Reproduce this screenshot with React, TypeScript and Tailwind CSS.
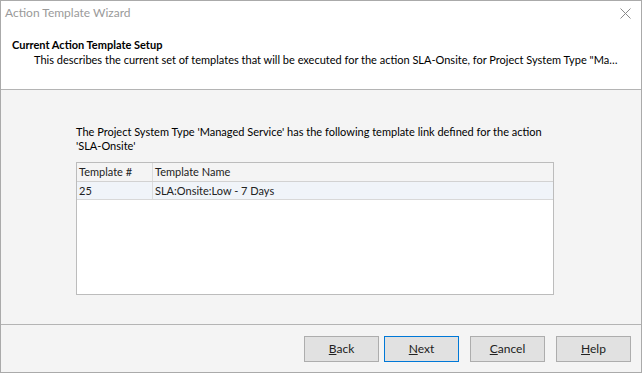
const buttons = [
  { key: 'B', rest: 'ack', primary: false },
  { key: 'N', rest: 'ext', primary: true },
  { key: 'C', rest: 'ancel', primary: false },
  { key: 'H', rest: 'elp', primary: false },
];

export default function App() {
  return (
    <div className="w-[642px] h-[373px] border border-[#aaaaaa] bg-white flex flex-col text-[11px] text-black font-['Lato',sans-serif] overflow-hidden">
      {/* title bar */}
      <div className="h-[24px] flex items-center justify-between pl-[4px] pr-[9px] shrink-0">
        <span className="text-[12px] text-[#9a9a9a]">Action Template Wizard</span>
        <svg width="11" height="11" viewBox="0 0 11 11" className="mr-[1px]">
          <path d="M0.5 0.5 L10.5 10.5 M10.5 0.5 L0.5 10.5" stroke="#8a8a8a" strokeWidth="1" fill="none" />
        </svg>
      </div>

      {/* header */}
      <div className="h-[65px] shrink-0 border-b border-[#b4b4b4] pt-[12px] leading-[15px]">
        <div className="pl-[11px] font-bold">Current Action Template Setup</div>
        <div className="pl-[33px] whitespace-nowrap">
          This describes the current set of templates that will be executed for the action SLA-Onsite, for Project System Type "Ma…
        </div>
      </div>

      {/* body */}
      <div className="flex-1 bg-[#f4f4f4] border-b border-[#b4b4b4] pt-[35px] pl-[75px]">
        <p className="leading-[14px] whitespace-nowrap">
          The Project System Type 'Managed Service' has the following template link defined for the action
          <br />
          'SLA-Onsite'
        </p>
        <div className="mt-[9px] w-[478px] h-[133px] border border-[#bcbcbc] bg-white">
          <div className="flex h-[19px] bg-[#f4f4f4] border-b border-[#d2d2d2] text-[#222]">
            <div className="w-[76px] border-r border-[#dcdcdc] pl-[2px] leading-[18px]">Template #</div>
            <div className="flex-1 pl-[2px] leading-[18px]">Template Name</div>
          </div>
          <div className="flex h-[18px] bg-[#f0f4f9] border-b border-[#d8d8d8] text-[#222]">
            <div className="w-[76px] border-r border-[#dcdcdc] pl-[2px] leading-[17px]">25</div>
            <div className="flex-1 pl-[2px] leading-[17px]">SLA:Onsite:Low - 7 Days</div>
          </div>
        </div>
      </div>

      {/* footer */}
      <div className="h-[47px] shrink-0 bg-[#f4f4f4] flex justify-end items-start pt-[11px] pr-[10px]">
        {buttons.map((b, i) => (
          <button
            key={b.key}
            className={`w-[75px] h-[26px] bg-[#e1e1e1] border text-[12px] text-[#222] leading-[24px] ${
              b.primary ? 'border-[#0078d7]' : 'border-[#adadad]'
            } ${i === 1 ? 'ml-[5px]' : i > 1 ? 'ml-[11px]' : ''}`}
          >
            <span className="underline">{b.key}</span>
            {b.rest}
          </button>
        ))}
      </div>
    </div>
  );
}
